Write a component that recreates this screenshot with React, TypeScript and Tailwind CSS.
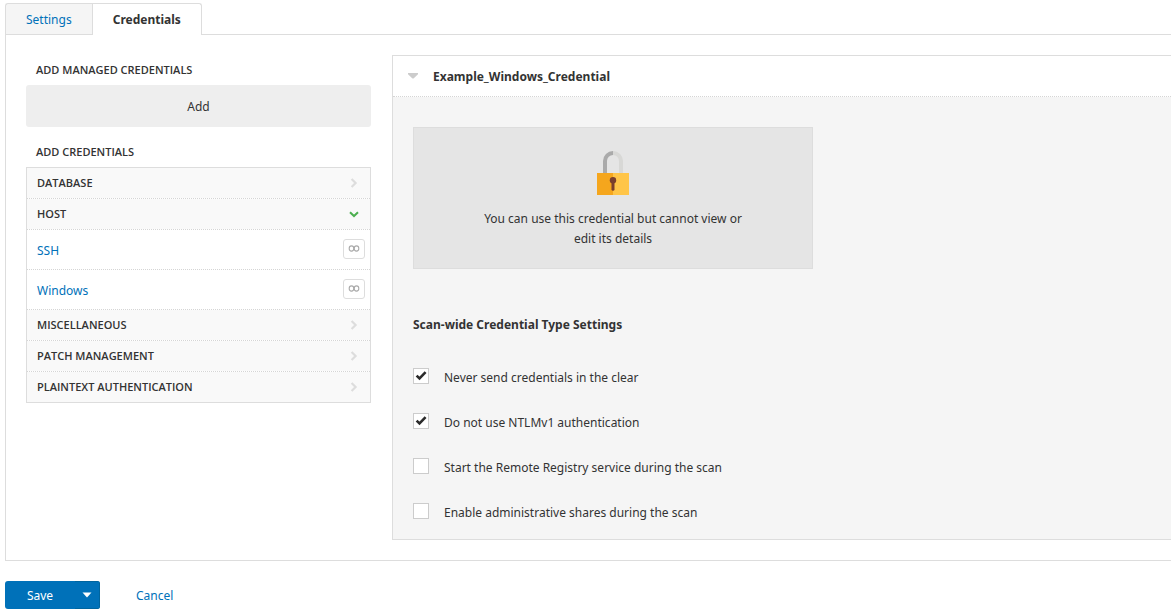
import { useState } from "react";

function Chevron({ open }: { open: boolean }) {
  return open ? (
    <svg width="10" height="10" viewBox="0 0 10 10" fill="none" stroke="#4caf50" strokeWidth="2" aria-hidden="true">
      <path d="M1 3.2L5 7L9 3.2" />
    </svg>
  ) : (
    <svg width="10" height="10" viewBox="0 0 10 10" fill="none" stroke="#dddddd" strokeWidth="2.2" aria-hidden="true">
      <path d="M2.6 1L6.6 5L2.6 9" />
    </svg>
  );
}

function Infinity() {
  return (
    <svg width="12" height="8" viewBox="0 0 12 8" fill="none" stroke="#aaaaaa" strokeWidth="1.1" aria-hidden="true">
      <ellipse cx="3.5" cy="3.5" rx="2.3" ry="2.6" />
      <ellipse cx="8.5" cy="3.5" rx="2.3" ry="2.6" />
    </svg>
  );
}

function Padlock() {
  return (
    <svg width="32" height="44" viewBox="0 0 32 44" aria-hidden="true">
      <path d="M6 22V10A10 10 0 0 1 16 0V4A6 6 0 0 0 10 10V22Z" fill="#aaaaaa" />
      <path d="M26 22V10A10 10 0 0 0 16 0V4A6 6 0 0 1 22 10V22Z" fill="#d8d8d6" />
      <path d="M0 22H16V44H0Z" fill="#f5a61d" />
      <path d="M16 22H32V44H16Z" fill="#ffc548" />
      <circle cx="16" cy="29.2" r="3.2" fill="#7b3f2c" />
      <path d="M14.5 30H17.5V38.2A1.5 1.5 0 0 1 14.5 38.2Z" fill="#7b3f2c" />
    </svg>
  );
}

const groups = [
  { name: "DATABASE", items: [] },
  { name: "HOST", items: ["SSH", "Windows"] },
  { name: "MISCELLANEOUS", items: [] },
  { name: "PATCH MANAGEMENT", items: [] },
  { name: "PLAINTEXT AUTHENTICATION", items: [] },
];

function CredentialGroups() {
  const [openGroup, setOpenGroup] = useState("HOST");
  return (
    <div className="divide-y divide-dotted divide-[#d5d5d5] border border-[#dddddd]">
      {groups.map(({ name, items }) => (
        <div key={name}>
          <button
            type="button"
            aria-expanded={openGroup === name}
            onClick={() => setOpenGroup(openGroup === name ? "" : name)}
            className="flex h-[30px] w-full items-center justify-between bg-[#f9f9f9] pr-[11px] pl-2.5 font-['Open_Sans',sans-serif] text-[11px] font-semibold"
          >
            {name}
            <Chevron open={openGroup === name} />
          </button>
          {openGroup === name &&
            items.map((item) => (
              <a
                key={item}
                href="#"
                className="flex h-10 items-start justify-between border-t border-dotted border-[#d5d5d5] pt-[9px] pr-[5px] pl-2.5 text-[#0071b9]"
              >
                <span className="pt-0.5">{item}</span>
                <span className="flex h-5 w-[22px] items-center justify-center rounded-[3px] border border-[#dddddd]">
                  <Infinity />
                </span>
              </a>
            ))}
        </div>
      ))}
    </div>
  );
}

function Option({ label, checked = false }: { label: string; checked?: boolean }) {
  return (
    <label className="flex h-5 w-fit items-start gap-[15px]">
      <span className="grid">
        <input
          type="checkbox"
          defaultChecked={checked}
          className="peer col-start-1 row-start-1 size-4 appearance-none border border-[#cccccc] bg-white"
        />
        <svg
          width="16"
          height="16"
          viewBox="0 0 16 16"
          fill="none"
          stroke="#2b2b2b"
          strokeWidth="2.6"
          aria-hidden="true"
          className="pointer-events-none invisible col-start-1 row-start-1 peer-checked:visible"
        >
          <path d="M3.6 7.6L6.5 10.4L12.6 4.2" />
        </svg>
      </span>
      {label}
    </label>
  );
}

export default function App() {
  return (
    <div className="pt-[3px] pl-[5px] font-['Noto_Sans',sans-serif] text-xs leading-5 text-[#333333]">
      <nav className="flex h-8 border-b border-[#dddddd]">
        <a href="#" className="flex items-center rounded-tl-[3px] border-t border-l border-[#dddddd] bg-[#f5f5f5] px-5 pt-px text-[#0071b9]">
          Settings
        </a>
        <a
          href="#"
          aria-current="page"
          className="-mb-px flex items-center rounded-tr-[3px] border-x border-t border-[#dddddd] bg-white px-5 pt-px font-bold"
        >
          Credentials
        </a>
      </nav>

      <main className="flex gap-[21px] border-b border-l border-[#dddddd] py-5 pl-5">
        <aside className="w-[345px] shrink-0 pt-[5px]">
          <h2 className="mb-[5px] pl-2.5 font-['Open_Sans',sans-serif] text-[11px] font-semibold">ADD MANAGED CREDENTIALS</h2>
          <button type="button" className="mb-[15px] h-[42px] w-full rounded-[3px] bg-[#eeeeee] pt-0.5">
            Add
          </button>
          <h2 className="mb-[5px] pl-2.5 font-['Open_Sans',sans-serif] text-[11px] font-semibold">ADD CREDENTIALS</h2>
          <CredentialGroups />
        </aside>

        <section className="grow border-y border-l border-[#dddddd] bg-[#f5f5f5]">
          <button
            type="button"
            aria-expanded="true"
            className="flex h-[41px] w-full items-center gap-[15px] border-b border-dotted border-[#d5d5d5] bg-white px-[15px] font-bold"
          >
            <svg width="10" height="6" viewBox="0 0 10 6" fill="#cccccc" aria-hidden="true">
              <path d="M0 0H10V1.2L5.8 5.2Q5 6 4.2 5.2L0 1.2Z" />
            </svg>
            <span className="pt-0.5">Example_Windows_Credential</span>
          </button>
          <div className="px-5 pt-[30px] pb-4">
            <div className="flex h-[142px] max-w-[400px] flex-col items-center border border-[#dddddd] bg-[#e5e5e5] pt-[23px]">
              <Padlock />
              <p className="mt-3.5 w-[280px] text-center">
                You can use this credential but cannot view or edit its details
              </p>
            </div>
            <h3 className="mt-[46px] mb-[33px] font-bold">Scan-wide Credential Type Settings</h3>
            <div className="flex flex-col gap-[25px]">
              <Option label="Never send credentials in the clear" checked />
              <Option label="Do not use NTLMv1 authentication" checked />
              <Option label="Start the Remote Registry service during the scan" />
              <Option label="Enable administrative shares during the scan" />
            </div>
          </div>
        </section>
      </main>

      <footer className="flex items-center gap-9 pt-5">
        <div className="flex h-7 overflow-hidden rounded-[3px] bg-[#0071b9] text-white">
          <button type="button" className="w-[70px] pt-0.5">
            Save
          </button>
          <button type="button" aria-label="More save options" className="flex w-[25px] items-center justify-center border-y border-r border-[#00659f]">
            <svg width="10" height="6" viewBox="0 0 10 6" fill="currentColor" aria-hidden="true">
              <path d="M0.5 0.5H9.5L5 5.5Z" />
            </svg>
          </button>
        </div>
        <a href="#" className="pt-0.5 text-[#0071b9]">
          Cancel
        </a>
      </footer>
    </div>
  );
}
